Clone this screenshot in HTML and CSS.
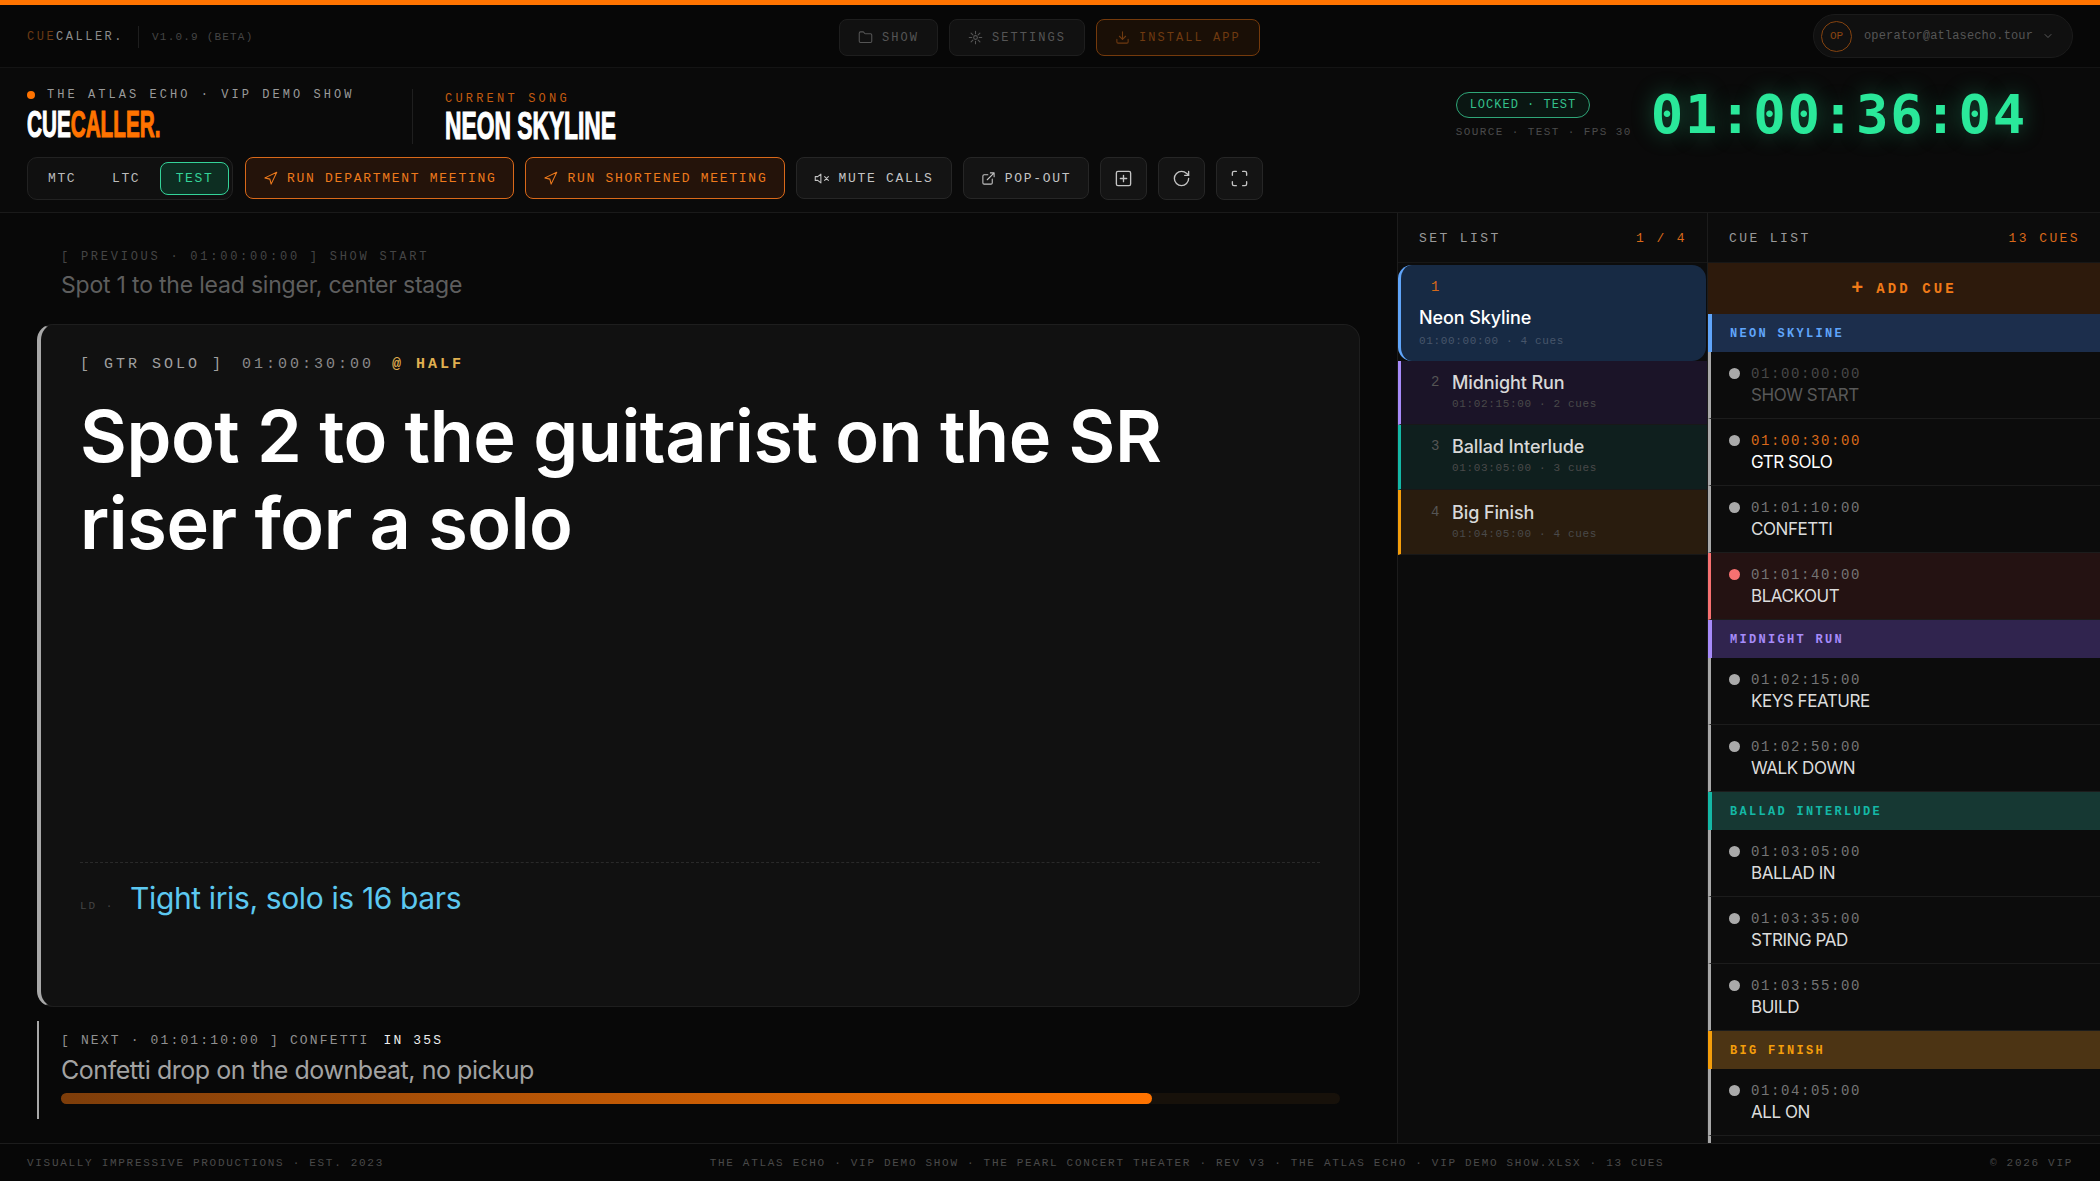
FILE: index.html
```html
<!DOCTYPE html>
<html lang="en">
<head>
  <meta charset="UTF-8">
  <title>CueCaller</title>
  <link rel="stylesheet" href="styles.css">
</head>
<body>
<div class="app">
  <div class="accent-bar"></div>

  <div class="topbar">
    <div class="topbar-left">
      <span class="mini-brand"><span class="mini-cue">CUE</span>CALLER.</span>
      <span class="version">V1.0.9 (BETA)</span>
    </div>
    <div class="topbar-center">
      <button class="top-btn">
        <svg class="ico" viewBox="0 0 24 24"><path d="M20 20a2 2 0 0 0 2-2V8a2 2 0 0 0-2-2h-7.9a2 2 0 0 1-1.69-.9L9.6 3.9A2 2 0 0 0 7.93 3H4a2 2 0 0 0-2 2v13a2 2 0 0 0 2 2Z"/></svg>
        SHOW
      </button>
      <button class="top-btn">
        <svg class="ico" viewBox="0 0 24 24"><circle cx="12" cy="12" r="3"/><path d="M12 2v4M12 18v4M4.9 4.9l2.9 2.9M16.2 16.2l2.9 2.9M2 12h4M18 12h4M4.9 19.1l2.9-2.9M16.2 7.8l2.9-2.9"/></svg>
        SETTINGS
      </button>
      <button class="top-btn top-btn-install">
        <svg class="ico" viewBox="0 0 24 24"><path d="M21 15v4a2 2 0 0 1-2 2H5a2 2 0 0 1-2-2v-4M7 10l5 5 5-5M12 15V3"/></svg>
        INSTALL APP
      </button>
    </div>
    <div class="account">
      <span class="avatar">OP</span>
      <span class="account-mail">operator@atlasecho.tour</span>
      <svg class="ico chevron" viewBox="0 0 24 24"><path d="m6 9 6 6 6-6"/></svg>
    </div>
  </div>

  <header class="header">
    <div class="header-main">
      <div class="title-row">
        <div class="brand">
          <div class="show-name"><span class="live-dot"></span>THE ATLAS ECHO · VIP DEMO SHOW</div>
          <div class="logo">CUE<span class="orange">CALLER.</span></div>
        </div>
        <div class="song">
          <div class="song-label">CURRENT SONG</div>
          <div class="song-name">NEON SKYLINE</div>
        </div>
      </div>
      <div class="controls">
        <div class="source-toggle">
          <span class="source">MTC</span>
          <span class="source">LTC</span>
          <span class="source source-on">TEST</span>
        </div>
        <button class="ctl ctl-run">
          <svg class="ico" viewBox="0 0 24 24"><path d="M3 11l19-9-9 19-2-8-8-2z"/></svg>
          RUN DEPARTMENT MEETING
        </button>
        <button class="ctl ctl-run">
          <svg class="ico" viewBox="0 0 24 24"><path d="M3 11l19-9-9 19-2-8-8-2z"/></svg>
          RUN SHORTENED MEETING
        </button>
        <button class="ctl">
          <svg class="ico" viewBox="0 0 24 24"><path d="M11 5 6 9H2v6h4l5 4V5z"/><path d="m23 9-6 6M17 9l6 6"/></svg>
          MUTE CALLS
        </button>
        <button class="ctl">
          <svg class="ico" viewBox="0 0 24 24"><path d="M18 13v6a2 2 0 0 1-2 2H5a2 2 0 0 1-2-2V8a2 2 0 0 1 2-2h6M15 3h6v6M10 14 21 3"/></svg>
          POP-OUT
        </button>
        <button class="ctl ctl-square">
          <svg class="ico ico-big" viewBox="0 0 24 24"><rect x="3" y="3" width="18" height="18" rx="2"/><path d="M12 8v8M8 12h8"/></svg>
        </button>
        <button class="ctl ctl-square">
          <svg class="ico ico-big" viewBox="0 0 24 24"><path d="M21 12a9 9 0 1 1-9-9c2.5 0 4.8 1 6.7 2.7L21 8"/><path d="M21 3v5h-5"/></svg>
        </button>
        <button class="ctl ctl-square">
          <svg class="ico ico-big" viewBox="0 0 24 24"><path d="M3 8V5a2 2 0 0 1 2-2h3M16 3h3a2 2 0 0 1 2 2v3M21 16v3a2 2 0 0 1-2 2h-3M8 21H5a2 2 0 0 1-2-2v-3"/></svg>
        </button>
      </div>
    </div>
    <div class="clock">
      <div class="clock-status">
        <span class="locked">LOCKED · TEST</span>
        <span class="clock-source">SOURCE · TEST · FPS 30</span>
      </div>
      <div class="timecode">01:00:36:04</div>
    </div>
  </header>

  <main class="main">
    <section class="stage">
      <div class="prev-cue">
        <div class="prev-label">[ PREVIOUS · 01:00:00:00 ] SHOW START</div>
        <div class="prev-text">Spot 1 to the lead singer, center stage</div>
      </div>

      <div class="current">
        <div class="current-label">[ GTR SOLO ]<span class="current-time">01:00:30:00</span><span class="current-half">@ HALF</span></div>
        <h1 class="current-text">Spot 2 to the guitarist on the SR riser for a solo</h1>
        <div class="dept-note">
          <span class="dept-tag">LD ·</span>
          <span class="dept-text">Tight iris, solo is 16 bars</span>
        </div>
      </div>

      <div class="next-cue">
        <div class="next-label">[ NEXT · 01:01:10:00 ] CONFETTI <b class="next-in">IN 35S</b></div>
        <div class="next-text">Confetti drop on the downbeat, no pickup</div>
        <div class="progress"><div class="progress-fill" style="width: 85.3%"></div></div>
      </div>
    </section>

    <aside class="setlist">
      <div class="panel-head"><span>SET LIST</span><span class="panel-count">1 / 4</span></div>
      <div class="song-item song-item-active">
        <span class="song-num">1</span>
        <div class="song-title">Neon Skyline</div>
        <div class="song-meta">01:00:00:00 · 4 cues</div>
      </div>
      <div class="song-item song-purple">
        <span class="song-num">2</span>
        <div>
          <div class="song-title">Midnight Run</div>
          <div class="song-meta">01:02:15:00 · 2 cues</div>
        </div>
      </div>
      <div class="song-item song-teal">
        <span class="song-num">3</span>
        <div>
          <div class="song-title">Ballad Interlude</div>
          <div class="song-meta">01:03:05:00 · 3 cues</div>
        </div>
      </div>
      <div class="song-item song-amber">
        <span class="song-num">4</span>
        <div>
          <div class="song-title">Big Finish</div>
          <div class="song-meta">01:04:05:00 · 4 cues</div>
        </div>
      </div>
    </aside>

    <aside class="cuelist">
      <div class="panel-head"><span>CUE LIST</span><span class="panel-count">13 CUES</span></div>
      <button class="add-cue"><span class="add-plus">+</span>ADD CUE</button>

      <div class="section section-blue">NEON SKYLINE</div>
      <div class="cue cue-past"><span class="cue-dot"></span><div><div class="cue-time">01:00:00:00</div><div class="cue-name">SHOW START</div></div></div>
      <div class="cue cue-now"><span class="cue-dot"></span><div><div class="cue-time">01:00:30:00</div><div class="cue-name">GTR SOLO</div></div></div>
      <div class="cue"><span class="cue-dot"></span><div><div class="cue-time">01:01:10:00</div><div class="cue-name">CONFETTI</div></div></div>
      <div class="cue cue-red"><span class="cue-dot"></span><div><div class="cue-time">01:01:40:00</div><div class="cue-name">BLACKOUT</div></div></div>

      <div class="section section-purple">MIDNIGHT RUN</div>
      <div class="cue"><span class="cue-dot"></span><div><div class="cue-time">01:02:15:00</div><div class="cue-name">KEYS FEATURE</div></div></div>
      <div class="cue"><span class="cue-dot"></span><div><div class="cue-time">01:02:50:00</div><div class="cue-name">WALK DOWN</div></div></div>

      <div class="section section-teal">BALLAD INTERLUDE</div>
      <div class="cue"><span class="cue-dot"></span><div><div class="cue-time">01:03:05:00</div><div class="cue-name">BALLAD IN</div></div></div>
      <div class="cue"><span class="cue-dot"></span><div><div class="cue-time">01:03:35:00</div><div class="cue-name">STRING PAD</div></div></div>
      <div class="cue"><span class="cue-dot"></span><div><div class="cue-time">01:03:55:00</div><div class="cue-name">BUILD</div></div></div>

      <div class="section section-amber">BIG FINISH</div>
      <div class="cue"><span class="cue-dot"></span><div><div class="cue-time">01:04:05:00</div><div class="cue-name">ALL ON</div></div></div>
      <div class="cue"></div>
    </aside>
  </main>

  <footer class="footer">
    <span>VISUALLY IMPRESSIVE PRODUCTIONS · EST. 2023</span>
    <span>THE ATLAS ECHO · VIP DEMO SHOW · THE PEARL CONCERT THEATER · REV V3 · THE ATLAS ECHO · VIP DEMO SHOW.XLSX · 13 CUES</span>
    <span>© 2026 VIP</span>
  </footer>
</div>
</body>
</html>
```

FILE: styles.css
```css
* {
  box-sizing: border-box;
}

html, body {
  margin: 0;
  height: 100%;
  overflow: hidden;
}

body {
  background: #0a0a0a;
  color: #ddd;
  font-family: "Liberation Mono", monospace;
}

button {
  font-family: inherit;
  cursor: pointer;
}

.orange {
  color: #ff7300;
}

.app {
  display: flex;
  flex-direction: column;
  height: 1181px;
}

.accent-bar {
  height: 5px;
  flex: none;
  background: #ff7300;
}

.ico {
  width: 15px;
  height: 15px;
  flex: none;
  fill: none;
  stroke: currentColor;
  stroke-width: 1.7;
  stroke-linecap: round;
  stroke-linejoin: round;
}

.ico-big {
  width: 19px;
  height: 19px;
}

/* top bar */
.topbar {
  position: relative;
  flex: none;
  height: 63px;
  display: flex;
  align-items: center;
  justify-content: space-between;
  padding: 0 27px;
  background: #070707;
  border-bottom: 1px solid #141414;
}

.topbar-left {
  display: flex;
  align-items: center;
  padding-top: 1px;
}

.mini-brand {
  font-size: 12px;
  letter-spacing: 2.5px;
  color: #8c8c8c;
  padding-right: 14px;
  border-right: 1px solid #1e1e1e;
  line-height: 22px;
}

.mini-cue {
  color: #6b3a14;
}

.version {
  margin-left: 13px;
  font-size: 11px;
  letter-spacing: 1.2px;
  color: #454545;
}

.topbar-center {
  position: absolute;
  left: 839px;
  top: 14px;
  display: flex;
  gap: 11px;
}

.top-btn {
  height: 37px;
  display: flex;
  align-items: center;
  gap: 9px;
  padding: 0 18px;
  background: #111;
  border: 1px solid #1e1e1e;
  border-radius: 8px;
  color: #555;
  font-size: 12px;
  letter-spacing: 2.05px;
}

.top-btn-install {
  background: #1a0f06;
  border-color: #743a0c;
  color: #6f3a10;
}

.account {
  display: flex;
  align-items: center;
  width: 260px;
  height: 44px;
  padding: 0 18px 0 7px;
  background: #101010;
  border: 1px solid #1b1b1b;
  border-radius: 22px;
}

.avatar {
  width: 31px;
  height: 31px;
  flex: none;
  display: flex;
  align-items: center;
  justify-content: center;
  border: 1px solid #85430f;
  border-radius: 50%;
  color: #8a4510;
  font-size: 11px;
}

.account-mail {
  margin-left: 12px;
  font-size: 12px;
  letter-spacing: .15px;
  color: #555;
  white-space: nowrap;
}

.chevron {
  margin-left: auto;
  width: 12px;
  height: 12px;
  color: #666;
}

/* header */
.header {
  flex: none;
  height: 145px;
  display: flex;
  justify-content: space-between;
  padding: 0 27px;
  background: #0a0a0a;
  border-bottom: 1px solid #1a1a1a;
}

.title-row {
  display: flex;
  height: 89px;
  padding-top: 19px;
}

.brand {
  width: 386px;
  flex: none;
  border-right: 1px solid #1f1f1f;
  height: 55px;
  margin-top: 2px;
}

.show-name {
  display: flex;
  align-items: center;
  margin-top: -1px;
  font-size: 12px;
  line-height: 14px;
  letter-spacing: 3.05px;
  color: #9a9a9a;
}

.live-dot {
  width: 8px;
  height: 8px;
  margin-right: 12px;
  border-radius: 50%;
  background: #ff7300;
}

.logo, .song-name {
  font-family: "Liberation Sans", sans-serif;
  font-weight: 700;
  color: #fff;
  transform-origin: left center;
  white-space: nowrap;
  -webkit-text-stroke: 1.2px currentColor;
}

.logo {
  font-size: 36px;
  line-height: 34px;
  margin-top: 6px;
  transform: scaleX(.575);
}

.logo .orange {
  -webkit-text-stroke: 1.2px #ff7300;
}

.song {
  margin-left: 32px;
}

.song-label {
  margin-top: 5px;
  font-size: 12px;
  line-height: 14px;
  letter-spacing: 3.2px;
  color: #c45c10;
}

.song-name {
  font-size: 38px;
  line-height: 36px;
  margin-top: 2px;
  transform: scaleX(.6);
}

.controls {
  display: flex;
  align-items: flex-start;
  gap: 11px;
}

.source-toggle {
  width: 206px;
  height: 43px;
  display: flex;
  align-items: center;
  padding-left: 20px;
  margin-right: 1px;
  background: #101010;
  border: 1px solid #222;
  border-radius: 10px;
}

.source {
  font-size: 13px;
  letter-spacing: 1.6px;
  color: #bbb;
  width: 64px;
}

.source-on {
  width: 69px;
  height: 33px;
  margin-left: -16px;
  display: flex;
  align-items: center;
  justify-content: center;
  background: #0d2e22;
  border: 1.5px solid #34d399;
  border-radius: 8px;
  color: #34d399;
}

.ctl {
  height: 42px;
  display: flex;
  align-items: center;
  gap: 9px;
  padding: 0 17px;
  background: #141414;
  border: 1px solid #262626;
  border-radius: 8px;
  color: #c4c4c4;
  font-size: 13px;
  letter-spacing: 1.72px;
  white-space: nowrap;
}

.ctl-run {
  background: #24130a;
  border: 1.5px solid #d9691a;
  color: #ee7a1c;
}

.ctl-square {
  width: 47px;
  height: 43px;
  padding: 0;
  justify-content: center;
}

.clock {
  display: flex;
  align-items: flex-start;
  margin-right: 46px;
  padding-top: 16px;
}

.clock-status {
  display: flex;
  flex-direction: column;
  align-items: flex-start;
  margin-right: 19px;
  padding-top: 8px;
}

.locked {
  height: 26px;
  display: flex;
  align-items: center;
  padding: 0 13px;
  border: 1.5px solid #2fa678;
  border-radius: 13px;
  background: #0a1612;
  font-size: 12px;
  letter-spacing: 1px;
  color: #34c08c;
}

.clock-source {
  margin-top: 8px;
  font-size: 11px;
  letter-spacing: 1.4px;
  color: #4a4a4a;
  white-space: nowrap;
}

.timecode {
  font-family: "DejaVu Sans Mono", monospace;
  font-weight: 700;
  font-size: 54px;
  line-height: 62px;
  letter-spacing: 1.7px;
  color: #2ae89a;
  text-shadow: 0 0 22px rgba(42, 232, 154, .35);
}

/* main area */
.main {
  flex: 1;
  min-height: 0;
  display: grid;
  grid-template-columns: 1397px 310px 1fr;
  overflow: hidden;
}

.stage {
  display: flex;
  flex-direction: column;
  padding: 35px 37px 0;
  background: #080808;
}

.prev-cue {
  padding-left: 24px;
  height: 76px;
}

.prev-label {
  font-size: 12px;
  line-height: 18px;
  letter-spacing: 2.75px;
  color: #454545;
}

.prev-text {
  font-family: Inter, sans-serif;
  font-size: 23px;
  line-height: 28px;
  margin-top: 5px;
  letter-spacing: -.2px;
  color: #5e5e5e;
}

.current {
  height: 683px;
  display: flex;
  flex-direction: column;
  padding: 30px 39px 0 39px;
  background: #111;
  border: 1px solid #1e1e1e;
  border-left: 4px solid #a8a8a8;
  border-radius: 16px;
}

.current-label {
  font-size: 15px;
  line-height: 20px;
  letter-spacing: 3px;
  color: #a0a0a0;
}

.current-time {
  margin-left: 18px;
  color: #8a8a8a;
}

.current-half {
  margin-left: 18px;
  font-weight: 700;
  color: #e0b050;
}

.current-text {
  margin: 17px 0 0;
  font-family: Inter, sans-serif;
  font-weight: 600;
  font-size: 72px;
  line-height: 87px;
  letter-spacing: -.43px;
  color: #fff;
  max-width: 1220px;
}

.dept-note {
  display: flex;
  align-items: baseline;
  height: 144px;
  margin-top: auto;
  padding-top: 14px;
  border-top: 1px dashed #2a2a2a;
}

.dept-tag {
  width: 50px;
  flex: none;
  font-size: 11px;
  letter-spacing: 2px;
  color: #444;
}

.dept-text {
  font-family: Inter, sans-serif;
  font-size: 30px;
  line-height: 42px;
  letter-spacing: -.37px;
  color: #5cc8f0;
}

.next-cue {
  height: 98px;
  margin-top: 14px;
  padding: 11px 22px 0 22px;
  border-left: 2px solid #a8a8a8;
}

.next-label {
  font-size: 13px;
  line-height: 18px;
  letter-spacing: 2.15px;
  color: #909090;
}

.next-in {
  color: #eee;
  font-weight: 400;
  margin-left: 4px;
}

.next-text {
  font-family: Inter, sans-serif;
  font-size: 25px;
  line-height: 34px;
  margin-top: 3px;
  letter-spacing: -.45px;
  color: #a3a3a3;
}

.progress {
  height: 11px;
  margin-top: 6px;
  margin-right: -2px;
  background: #17110a;
  border-radius: 6px;
}

.progress-fill {
  height: 100%;
  background: linear-gradient(90deg, #7d3d0a, #ff7300);
  border-radius: 6px;
}

/* side panels */
.setlist, .cuelist {
  background: #0c0c0c;
  border-left: 1px solid #1c1c1c;
  min-height: 0;
}

.panel-head {
  height: 50px;
  display: flex;
  align-items: center;
  justify-content: space-between;
  padding: 2px 20px 0 21px;
  font-size: 13px;
  letter-spacing: 2.4px;
  color: #9a9a9a;
  border-bottom: 1px solid #171717;
}

.panel-count {
  color: #d9691a;
}

.song-item {
  height: 64px;
  display: flex;
  padding: 11px 12px 0 30px;
  border-left: 3px solid;
  border-bottom: 1px solid #181818;
}

.song-num {
  width: 21px;
  flex: none;
  font-size: 14px;
  line-height: 20px;
  color: #555;
}

.song-title {
  font-family: Inter, sans-serif;
  font-weight: 500;
  font-size: 18px;
  line-height: 21px;
  letter-spacing: -.1px;
  color: #d8d8d8;
}

.song-meta {
  margin-top: 4px;
  font-size: 11px;
  line-height: 14px;
  letter-spacing: .65px;
  color: #4a4a4a;
}

.song-item-active {
  display: block;
  height: 96px;
  margin: 2px 1px 0 0;
  padding: 12px 12px 0 18px;
  background: #172a44;
  border-left-color: #60a5fa;
  border-bottom: 0;
  border-radius: 14px;
}

.song-item-active .song-num {
  display: block;
  margin-left: 12px;
  color: #d5691a;
}

.song-item-active .song-title {
  margin-top: 10px;
  color: #fff;
}

.song-item-active .song-meta {
  margin-top: 6px;
  color: #47566b;
}

.song-purple {
  background: #1b1428;
  border-left-color: #a78bfa;
}

.song-teal {
  height: 65px;
  background: #0f1f1e;
  border-left-color: #14b8a6;
}

.song-amber {
  height: 65px;
  padding-top: 12px;
  background: #291c0e;
  border-left-color: #f59e0b;
}

.add-cue {
  display: flex;
  align-items: center;
  justify-content: center;
  width: 100%;
  height: 51px;
  padding-top: 1px;
  background: #2d1a0c;
  border: 0;
  color: #f07a18;
  font-size: 14px;
  font-weight: 700;
  letter-spacing: 3.1px;
}

.add-plus {
  font-size: 20px;
  margin-right: 13px;
  letter-spacing: 0;
}

.section {
  height: 38px;
  display: flex;
  align-items: center;
  padding: 1px 0 0 18px;
  border-left: 4px solid;
  font-size: 12px;
  font-weight: 700;
  letter-spacing: 2.3px;
}

.section-blue {
  background: #1c2e4c;
  border-left-color: #60a5fa;
  color: #60a5fa;
}

.section-purple {
  background: #30244e;
  border-left-color: #a78bfa;
  color: #a78bfa;
}

.section-teal {
  background: #163833;
  border-left-color: #14b8a6;
  color: #14b8a6;
}

.section-amber {
  background: #4c3414;
  border-left-color: #f59e0b;
  color: #f59e0b;
}

.cue {
  height: 67px;
  display: flex;
  padding: 13px 12px 0 18px;
  border-left: 3px solid #a8a8a8;
  border-bottom: 1px solid #1c1c1c;
}

.cue-dot {
  width: 11px;
  height: 11px;
  flex: none;
  margin-top: 3px;
  margin-right: 11px;
  border-radius: 50%;
  background: #aaa;
}

.cue-time {
  font-size: 14px;
  line-height: 18px;
  letter-spacing: 1.6px;
  color: #757575;
}

.cue-name {
  font-family: Inter, sans-serif;
  font-size: 17px;
  line-height: 24px;
  letter-spacing: -.45px;
  color: #dcdcdc;
}

.cue-past .cue-time {
  color: #484848;
}

.cue-past .cue-name {
  color: #585858;
}

.cue-now .cue-time {
  color: #d9691a;
}

.cue-now .cue-name {
  color: #fff;
}

.cue-red {
  background: #241212;
  border-left-color: #f87171;
}

.cue-red .cue-dot {
  background: #f87171;
}

/* footer */
.footer {
  flex: none;
  height: 38px;
  display: flex;
  align-items: center;
  justify-content: space-between;
  padding: 1px 27px 0;
  background: #070707;
  border-top: 1px solid #1c1c1c;
  font-size: 11px;
  letter-spacing: 1.7px;
  color: #4a4a4a;
  white-space: nowrap;
}
```
